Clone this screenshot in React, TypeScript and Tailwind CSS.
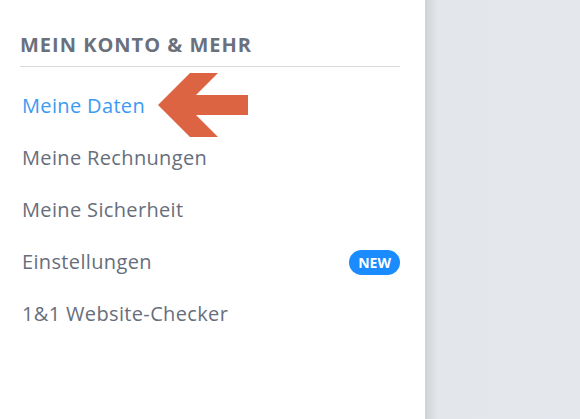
const items = [
  { label: 'Meine Daten', active: true },
  { label: 'Meine Rechnungen' },
  { label: 'Meine Sicherheit' },
  { label: 'Einstellungen', badge: 'NEW' },
  { label: '1&1 Website-Checker' },
];

const App = () => {
  return (
    <div className="flex h-[419px] w-[580px] overflow-hidden bg-[#e4e7ec]" style={{ fontFamily: '"Open Sans", sans-serif' }}>
      {/* Sidebar */}
      <div className="relative w-[425px] shrink-0 bg-white pl-5 pr-[25px] pt-[33px]">
        <h2 className="border-b border-[#d9d9d9] pb-[9px] text-[20px] leading-[24px] font-bold tracking-[1px] text-[#6a717d]">
          MEIN KONTO &amp; MEHR
        </h2>
        <ul className="mt-[27px] flex flex-col gap-[28px]">
          {items.map((item) => (
            <li key={item.label} className="flex h-6 items-center justify-between pl-[2px]">
              <span className={`text-[20px] tracking-[0.35px] ${item.active ? 'text-[#3b9af3]' : 'text-[#676e7b]'}`}>
                {item.label}
              </span>
              {item.badge && (
                <span className="rounded-full bg-[#1a8cff] px-[9px] py-[2px] text-[14px] font-bold text-white">
                  {item.badge}
                </span>
              )}
            </li>
          ))}
        </ul>

        {/* Annotation arrow */}
        <svg className="absolute left-[156px] top-[71px]" width="94" height="68" viewBox="0 0 94 68">
          <polygon points="2,34 34,2 62,2 40,24 92,24 92,44 40,44 62,66 34,66" fill="#dc6443" />
        </svg>
      </div>

      {/* Content area with shadow on the left edge */}
      <div className="flex-1 bg-gradient-to-r from-[#ced1d5] via-[#e3e6eb] via-[8%] to-[#e4e7ec]" />
    </div>
  );
};

export default App;
